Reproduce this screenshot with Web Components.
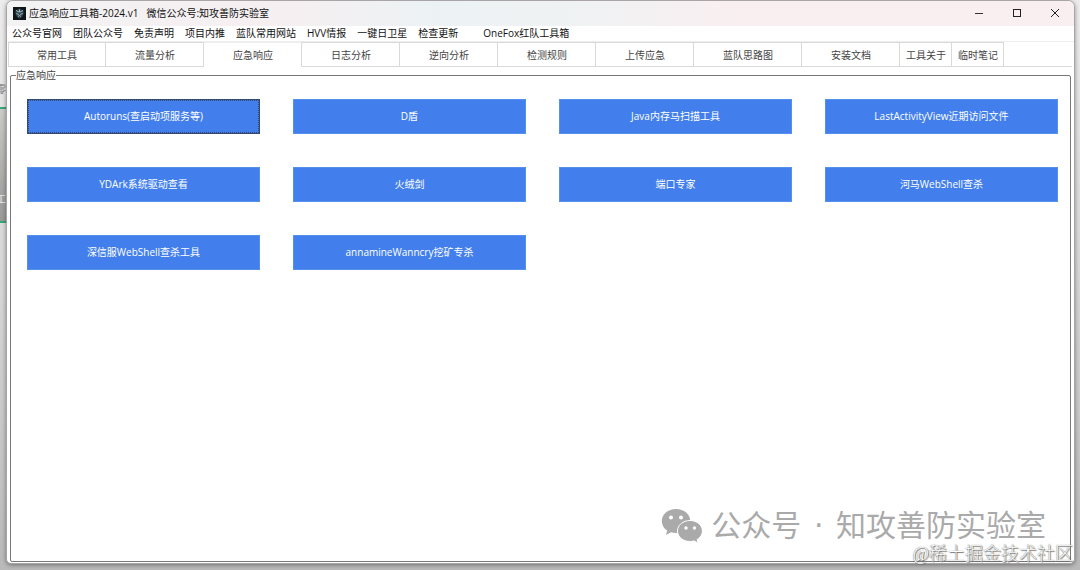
<!DOCTYPE html>
<html lang="zh-CN">
<head>
<meta charset="utf-8">
<title>应急响应工具箱</title>
<style>
html, body { margin: 0; height: 100%; }
body {
  overflow: hidden;
  font: 10px/16px "Open Sans", "Noto Sans CJK SC", sans-serif;
  color: #222;
}
</style>
</head>
<body>
<tool-desktop>
  <tool-window>
    <title-bar slot="title" caption="应急响应工具箱-2024.v1" note="微信公众号:知攻善防实验室"></title-bar>
    <menu-bar slot="menu" items="公众号官网,团队公众号,免责声明,项目内推,蓝队常用网站,HVV情报,一键日卫星,检查更新,OneFox红队工具箱"></menu-bar>
    <tab-strip slot="tabs" active="应急响应" items="常用工具,流量分析,应急响应,日志分析,逆向分析,检测规则,上传应急,蓝队思路图,安装文档,工具关于,临时笔记"></tab-strip>
    <tool-group label="应急响应">
      <tool-button focused>Autoruns(查启动项服务等)</tool-button>
      <tool-button>D盾</tool-button>
      <tool-button>Java内存马扫描工具</tool-button>
      <tool-button>LastActivityView近期访问文件</tool-button>
      <tool-button>YDArk系统驱动查看</tool-button>
      <tool-button>火绒剑</tool-button>
      <tool-button>端口专家</tool-button>
      <tool-button>河马WebShell查杀</tool-button>
      <tool-button>深信服WebShell查杀工具</tool-button>
      <tool-button>annamineWanncry挖矿专杀</tool-button>
    </tool-group>
  </tool-window>
  <account-mark slot="overlay">公众号 <i>·</i> 知攻善防实验室</account-mark>
  <site-mark slot="overlay">@稀土掘金技术社区</site-mark>
</tool-desktop>

<script>
function define(name, html, setup) {
  customElements.define(name, class extends HTMLElement {
    constructor() {
      super();
      this.attachShadow({ mode: "open" }).innerHTML = html;
    }
    connectedCallback() {
      if (setup) setup(this, this.shadowRoot);
    }
  });
}

define("tool-desktop", `
<style>
:host {
  position: relative; display: flex; flex-direction: column;
  box-sizing: border-box; height: 100vh; padding: 0 5px 6px 6px;
  background: linear-gradient(#ececec, #d6d6d6 50%, #b9b9b9);
}
/* page behind the window, only a sliver shows */
.behind {
  position: absolute; left: 0; top: 80px; width: 6px; overflow: hidden;
  display: flex; flex-direction: column; color: #777;
}
.behind span { height: 27px; line-height: 18px; text-indent: -4px; white-space: nowrap; }
.behind div {
  height: 112px; border: solid #35a878; border-width: 2px 0;
  background: linear-gradient(#cbcbc9, #989898); color: #eee;
}
.behind b { display: block; margin-top: 82px; font-weight: normal; text-indent: -4px; }
::slotted(tool-window) { flex: 1; }
</style>
<div class="behind" aria-hidden="true"><span>零</span><div><b>工</b></div></div>
<slot></slot>
<slot name="overlay"></slot>`);

define("tool-window", `
<style>
:host {
  position: relative; display: flex; flex-direction: column; min-height: 0;
  box-sizing: border-box; border: 1px solid #a9a5a7; border-radius: 7px 7px 5px 5px;
  background: #fff; overflow: hidden; box-shadow: 0 1px 4px #0006;
}
.page { flex: 1; display: flex; padding: 0 3px 1px; }
::slotted(tool-group) { flex: 1; }
</style>
<slot name="title"></slot>
<slot name="menu"></slot>
<slot name="tabs"></slot>
<div class="page"><slot></slot></div>`);

define("title-bar", `
<style>
:host {
  display: flex; align-items: center; height: 25px; padding-left: 6px;
  background: linear-gradient(90deg, #f3f3f4, #f6eff1 26%, #ecf2f4 40%, #f0f2f3 55%, #f9eff1 68%);
}
svg { display: block; }
span { padding-bottom: 2px; color: #111; }
.caption { margin-left: 3px; }
.note { margin-left: 8px; }
.controls { margin-left: auto; display: flex; }
button { width: 38px; height: 25px; padding: 0; border: 0; background: none; display: grid; place-items: center; }
</style>
<svg width="13" height="13" viewBox="0 0 13 13">
  <rect width="13" height="13" fill="#10151a"/>
  <path d="M6.5 1.5 10.6 3.4v3.4L9 10l-2.5 1.7L4 10 2.4 6.8V3.4z" fill="#31464c"/>
  <path d="M3 3.5 6 5M10 3.5 7 5M3.3 6.5l2.5 1M9.7 6.5l-2.5 1M5 9.5l1.5-1 1.5 1M6.5 2.4v3" fill="none" stroke="#a9c4c7" stroke-width=".9"/>
</svg>
<span class="caption"></span><span class="note"></span>
<div class="controls">
  <button aria-label="最小化"><svg width="10" height="10" viewBox="0 0 10 10"><path d="M1 4.5h8" stroke="#333"/></svg></button>
  <button aria-label="最大化"><svg width="10" height="10" viewBox="0 0 10 10"><rect x="1.5" y=".5" width="7" height="7" fill="none" stroke="#222"/></svg></button>
  <button aria-label="关闭"><svg width="10" height="10" viewBox="0 0 10 10"><path d="m1 0 8 8M9 0 1 8" stroke="#222"/></svg></button>
</div>`, (el, root) => {
  root.querySelector(".caption").textContent = el.getAttribute("caption");
  root.querySelector(".note").textContent = el.getAttribute("note");
});

define("menu-bar", `
<style>
:host { display: block; border-bottom: 1px solid #eee; }
nav { display: flex; gap: 11px; padding-left: 5px; }
button { height: 15px; padding: 0; border: 0; background: none; font: inherit; line-height: 15px; color: #111; white-space: nowrap; }
button:last-child { margin-left: 14px; }
</style>
<nav></nav>`, (el, root) => {
  root.querySelector("nav").innerHTML = el.getAttribute("items").split(",")
    .map((t) => `<button>${t}</button>`).join("");
});

define("tab-strip", `
<style>
:host { display: block; padding: 0 2px 0 1px; }
div { display: flex; background: linear-gradient(#d9d9d9, #d9d9d9) bottom / 100% 1px no-repeat; }
button {
  height: 25px; padding: 0 28px 0 29px; border: solid #d9d9d9; border-width: 1px 1px 1px 0;
  background: #fff; font: inherit; color: #444; white-space: nowrap;
}
button:first-child { border-left-width: 1px; padding-left: 28px; }
button[aria-selected="true"] { border-top-color: #eee; border-bottom-color: #fff; }
/* the last two tabs are narrow */
button:nth-last-child(-n+2) { padding: 0 5px 0 6px; }
</style>
<div role="tablist"></div>`, (el, root) => {
  const active = el.getAttribute("active");
  root.querySelector("div").innerHTML = el.getAttribute("items").split(",")
    .map((t) => `<button role="tab" aria-selected="${t === active}">${t}</button>`).join("");
});

define("tool-group", `
<style>
:host { display: flex; }
fieldset {
  flex: 1; min-width: 0; margin: 0; padding: 16px 12px 0 16px;
  border: 1px solid #777; border-radius: 2px;
}
legend { margin-left: -11px; padding: 0; color: #444; }
.grid { display: grid; grid-template-columns: repeat(4, 1fr); gap: 33px; }
</style>
<fieldset>
  <legend></legend>
  <div class="grid"><slot></slot></div>
</fieldset>`, (el, root) => {
  root.querySelector("legend").textContent = el.getAttribute("label");
});

define("tool-button", `
<style>
:host { display: block; }
button {
  display: block; width: 100%; height: 35px; padding: 0 0 2px;
  border: 1px solid #5590ee; background: #437fec; color: #fff; font: inherit;
}
:host([focused]) button { border: 1px solid #34496f; outline: 1px dotted #34496f; outline-offset: -2px; }
</style>
<button><slot></slot></button>`);

define("account-mark", `
<style>
:host {
  position: absolute; right: 34px; bottom: 22px; display: flex; align-items: center; gap: 8px;
  font-family: "DejaVu Sans", "Noto Sans CJK SC", sans-serif; font-size: 30px; line-height: 44px; color: #aaa; white-space: nowrap;
}
::slotted(i) { padding: 0 3px; font-style: normal; }
</style>
<svg width="42" height="36" viewBox="0 0 42 36">
  <path d="M15 1C7 1 .8 6.3 .8 13c0 4 2 7.3 5.4 9.6L5 27l5-2.700c1.6.4 3.2.7 5 .7 8 0 14.300-5.300 14.300-12S23 1 15 1z" fill="#aaa"/>
  <circle cx="10" cy="9.5" r="2" fill="#fff"/><circle cx="20" cy="9.5" r="2" fill="#fff"/>
  <path d="M29 12.5c-7 0-12.5 4.7-12.5 10.5S22 33.5 29 33.5c1.4 0 2.8-.2 4-.6l4.2 2.3-1-3.7c3.2-2 5.2-5 5.2-8.5 0-5.8-5.4-10.5-12.4-10.5z" fill="#aaa" stroke="#fff"/>
  <circle cx="25" cy="20" r="1.7" fill="#fff"/><circle cx="33.5" cy="20" r="1.7" fill="#fff"/>
</svg>
<span><slot></slot></span>`);

define("site-mark", `
<style>
:host {
  position: absolute; right: 7px; bottom: 4px; white-space: nowrap;
  font: 18px/24px "Liberation Serif", "Noto Sans CJK SC", serif; font-weight: 300;
  color: #fff; text-shadow: 0 0 1px #444, 1px 1px 1px #777;
}
</style>
<slot></slot>`);
</script>
</body>
</html>
